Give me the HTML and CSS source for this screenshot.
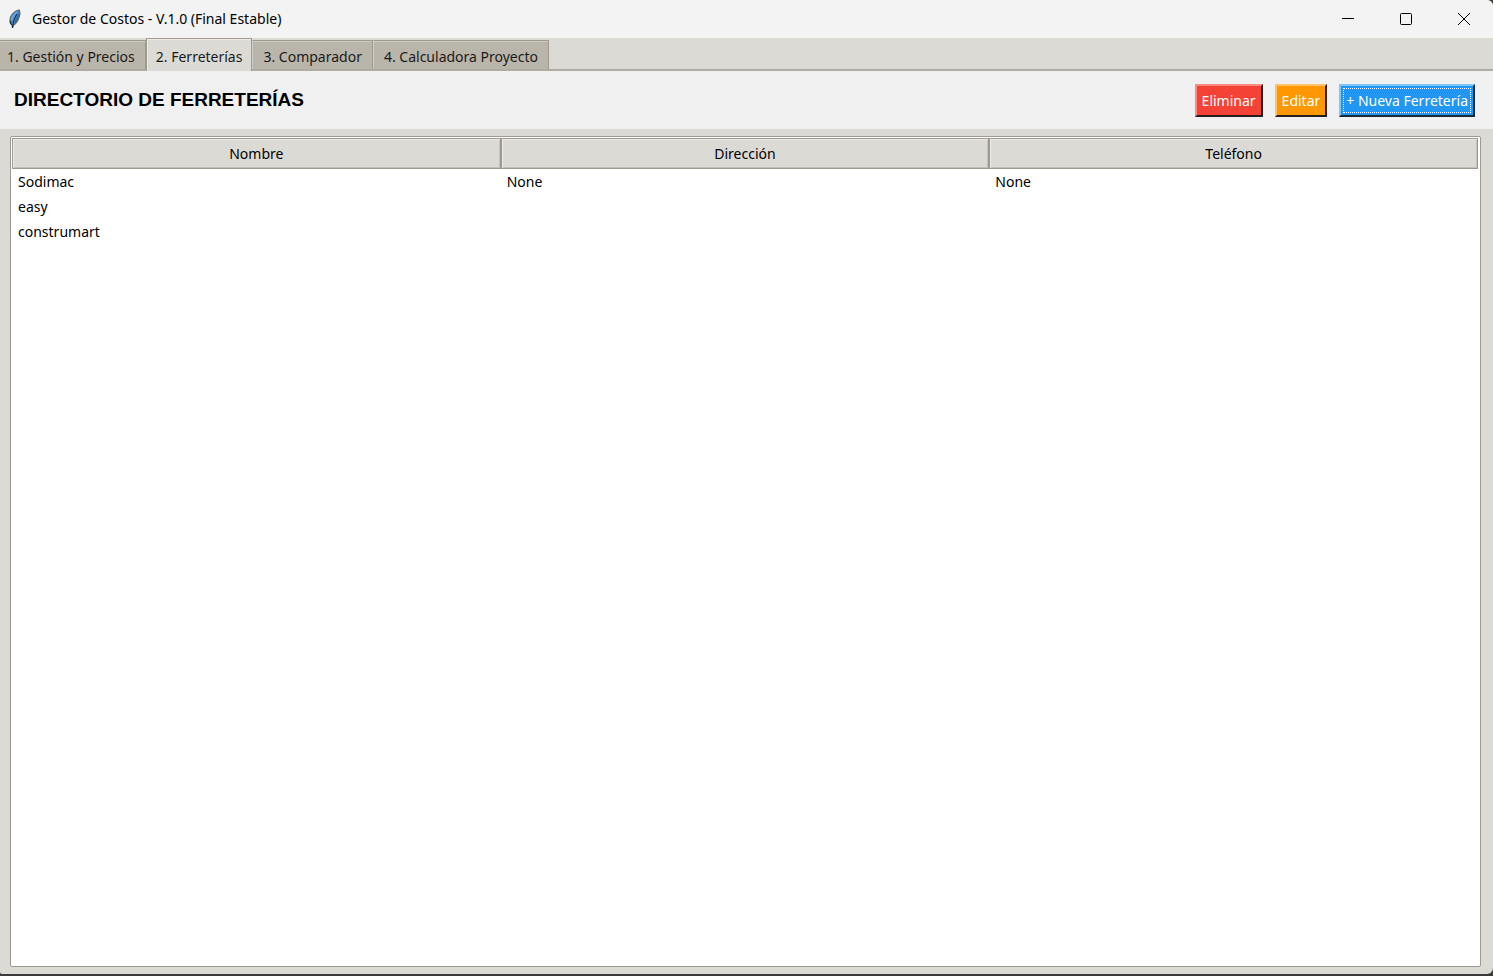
FILE: index.html
```html
<!DOCTYPE html>
<html lang="es">
<head>
    <meta charset="UTF-8">
    <meta name="viewport" content="width=device-width, initial-scale=1.0">
    <title>Gestor de Costos - V.1.0 (Final Estable)</title>
    <link rel="stylesheet" href="styles.css">
</head>
<body>
    <div class="window">
        <header class="titlebar">
            <svg class="app-icon" width="14" height="20" viewBox="0 0 14 20" aria-hidden="true">
                <path d="M11.500 1 C7 1.500 3 5 2 10 L2 14 L4 16.500 L4.500 19 L5.500 16.500 C9 14.500 11 10 12 5 Z" fill="#4a90d6" stroke="#55534f" stroke-width="1"/>
                <path d="M11 3 C11 8 9 13 6 15 C7 11 9 7 11 3" fill="#2f66a0"/>
                <path d="M9 5 C6.500 9 5 13 4.500 19" fill="none" stroke="#16202b" stroke-width="1"/>
                <path d="M9 3 C6 5 4 8 3.500 11" fill="none" stroke="#86b9ea" stroke-width="1"/>
                <path d="M2.500 12 L3 15 L4.500 16.500" fill="none" stroke="#222" stroke-width="1"/>
            </svg>
            <span class="title">Gestor de Costos - V.1.0 (Final Estable)</span>
            <div class="window-controls">
                <button type="button" aria-label="Minimizar">
                    <svg width="12" height="12" viewBox="0 0 12 12"><path d="M0 5.500 H12"/></svg>
                </button>
                <button type="button" aria-label="Maximizar">
                    <svg width="12" height="12" viewBox="0 0 12 12"><rect x="0.500" y="0.500" width="11" height="11" rx="1"/></svg>
                </button>
                <button type="button" aria-label="Cerrar">
                    <svg width="12" height="12" viewBox="0 0 12 12"><path d="M0 0 L12 12 M12 0 L0 12"/></svg>
                </button>
            </div>
        </header>

        <nav class="tabs" role="tablist">
            <button type="button" class="tab" role="tab">1. Gestión y Precios</button>
            <button type="button" class="tab active" role="tab" aria-selected="true">2. Ferreterías</button>
            <button type="button" class="tab" role="tab">3. Comparador</button>
            <button type="button" class="tab" role="tab">4. Calculadora Proyecto</button>
        </nav>

        <div class="toolbar">
            <h1>DIRECTORIO DE FERRETERÍAS</h1>
            <div class="actions">
                <button type="button" class="btn btn-delete">Eliminar</button>
                <button type="button" class="btn btn-edit">Editar</button>
                <button type="button" class="btn btn-new">+ Nueva Ferretería</button>
            </div>
        </div>

        <main class="content">
            <div class="tree">
                <table>
                    <thead>
                        <tr>
                            <th scope="col">Nombre</th>
                            <th scope="col">Dirección</th>
                            <th scope="col">Teléfono</th>
                        </tr>
                    </thead>
                    <tbody>
                        <tr>
                            <td>Sodimac</td>
                            <td>None</td>
                            <td>None</td>
                        </tr>
                        <tr>
                            <td>easy</td>
                            <td></td>
                            <td></td>
                        </tr>
                        <tr>
                            <td>construmart</td>
                            <td></td>
                            <td></td>
                        </tr>
                    </tbody>
                </table>
            </div>
        </main>
    </div>
</body>
</html>
```

FILE: styles.css
```css
* {
    box-sizing: border-box;
}
body {
    margin: 0;
    padding-bottom: 2px;
    background-color: #3c3b39;
    font-family: "Noto Sans", "Open Sans", sans-serif;
    font-size: 14px;
    color: #000;
}
button {
    font: inherit;
    margin: 0;
}
.window {
    display: flex;
    flex-direction: column;
    min-height: calc(100vh - 2px);
    border-radius: 0 6px 6px 2px;
    background-color: #dcdad5;
    overflow: hidden;
}

/* Title bar */
.titlebar {
    display: flex;
    align-items: center;
    height: 38px;
    padding-left: 8px;
    background-color: #f3f3f3;
}
.title {
    margin-left: 10px;
    line-height: 18px;
}
.window-controls {
    display: flex;
    align-self: stretch;
    margin-left: auto;
}
.window-controls button {
    display: flex;
    align-items: center;
    justify-content: center;
    width: 58px;
    padding: 0;
    border: none;
    background: none;
}
.window-controls svg {
    fill: none;
    stroke: #000;
    stroke-width: 1;
}

/* Tabs */
.tabs {
    display: flex;
    align-items: flex-end;
    height: 33px;
    border-bottom: 2px solid #b0aca2;
}
.tab {
    height: 29px;
    padding: 2px 10px 0;
    border: 1px solid #9e9a91;
    border-left-color: #cfcdc8;
    border-bottom: none;
    background-color: #bab5ab;
    box-shadow: inset 0 1px #cfcdc8;
    color: #1a1a1a;
    white-space: nowrap;
}
.tab:first-child {
    padding-left: 7px;
    border-left: none;
}
.tab.active {
    height: 33px;
    margin-bottom: -2px;
    padding: 2px 9px 0;
    border-left-color: #9e9a91;
    background-color: #dcdad5;
    box-shadow: inset 1px 1px #eeebe7;
}

/* Heading and actions */
.toolbar {
    display: flex;
    align-items: center;
    justify-content: space-between;
    height: 58px;
    padding: 0 18px 0 14px;
    background-color: #f0f0f0;
}
h1 {
    margin: 0;
    font-family: "Liberation Sans", Arial, sans-serif;
    font-size: 19px;
    font-weight: bold;
}
.actions {
    display: flex;
    gap: 12px;
}
.btn {
    height: 33px;
    padding: 0 5px;
    border: 2px solid;
    color: #fff;
    white-space: nowrap;
}
.btn-delete {
    background-color: #f44336;
    border-color: #ff8a80 #25201f #25201f #ff8a80;
}
.btn-edit {
    background-color: #ff9800;
    border-color: #ffc266 #25201f #25201f #ffc266;
}
.btn-new {
    background-color: #2196f3;
    border-color: #7cc4fa #172b3b #172b3b #7cc4fa;
    outline: 1px dotted #fff;
    outline-offset: -5px;
}

/* Table */
.content {
    display: flex;
    flex: 1;
    padding: 7px 12px 7px 10px;
}
.tree {
    flex: 1;
    padding: 1px 2px 1px 1px;
    border: 1px solid #9e9a91;
    border-radius: 2px;
    background-color: #fff;
}
table {
    width: 100%;
    table-layout: fixed;
    border-collapse: separate;
    border-spacing: 0;
}
th {
    height: 31px;
    padding: 0;
    border: 1px solid #9e9a91;
    background-color: #dcdad5;
    box-shadow: inset 1px 1px #eeebe7, inset -1px -1px #c4c1b9;
    font-weight: normal;
}
td {
    height: 25px;
    padding: 0 6px;
}
```
